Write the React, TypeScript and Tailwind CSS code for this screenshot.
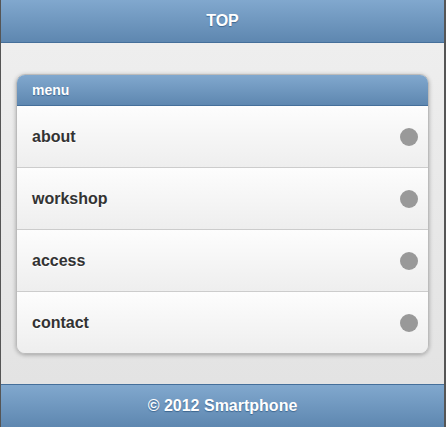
const items = ["about", "workshop", "access", "contact"];

function Bar({ children, top }: { children: React.ReactNode; top?: boolean }) {
  return (
    <div
      className={`flex h-[43px] items-center justify-center bg-[linear-gradient(#81a8ce,#5e87b0)] text-[16px] font-bold text-white [text-shadow:0_1px_1px_#3e6790] ${
        top ? "border-b border-[#456f9a]" : "border-t border-[#456f9a]"
      }`}
    >
      {children}
    </div>
  );
}

export default function App() {
  return (
    <div
      className="flex h-[427px] flex-col overflow-hidden border-l border-r-2 border-[#555] font-['Liberation_Sans',Arial,sans-serif]"
    >
      <Bar top>TOP</Bar>
      <div className="flex-1 bg-[linear-gradient(#eeeeee,#e3e3e3)] px-[15px] pt-[31px]">
        <div className="overflow-hidden rounded-[9px] border border-[#bbb] shadow-[0_1px_4px_rgba(0,0,0,0.3)]">
          <div className="flex h-[31px] items-center border-b border-[#456f9a] bg-[linear-gradient(#81a8ce,#5e87b0)] px-[15px] pt-px text-[14px] font-bold text-white [text-shadow:0_1px_1px_#3e6790]">
            menu
          </div>
          {items.map((label, i) => (
            <div
              key={label}
              className={`flex items-center justify-between bg-[linear-gradient(#fdfdfd,#eeeeee)] pl-[15px] pr-[10px] pt-px text-[16px] font-bold text-[#333] [text-shadow:0_1px_0_#fff] ${
                i < items.length - 1 ? "h-[62px] border-b border-[#ccc]" : "h-[61px]"
              }`}
            >
              <span>{label}</span>
              <span className="h-[18px] w-[18px] rounded-full bg-[#999]" />
            </div>
          ))}
        </div>
      </div>
      <Bar>© 2012 Smartphone</Bar>
    </div>
  );
}
